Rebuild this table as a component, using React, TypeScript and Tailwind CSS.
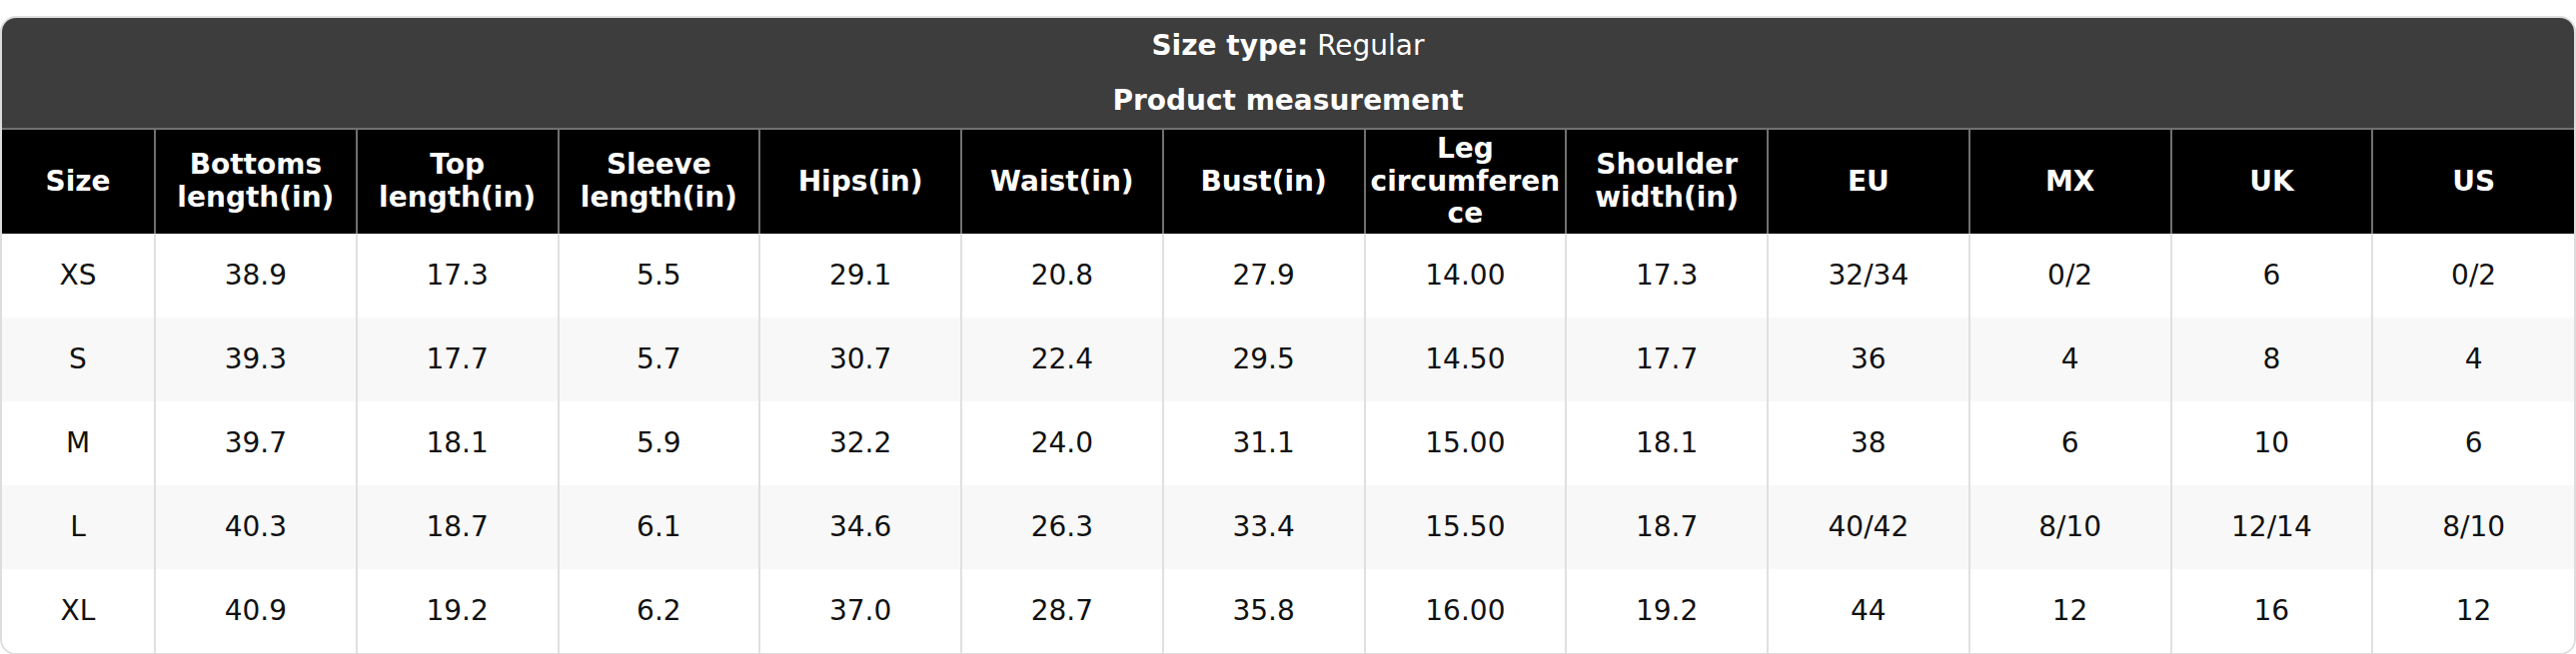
import React from "react";

const headers = [
  "Size",
  "Bottoms length(in)",
  "Top length(in)",
  "Sleeve length(in)",
  "Hips(in)",
  "Waist(in)",
  "Bust(in)",
  "Leg circumference",
  "Shoulder width(in)",
  "EU",
  "MX",
  "UK",
  "US",
];

const rows = [
  ["XS", "38.9", "17.3", "5.5", "29.1", "20.8", "27.9", "14.00", "17.3", "32/34", "0/2", "6", "0/2"],
  ["S", "39.3", "17.7", "5.7", "30.7", "22.4", "29.5", "14.50", "17.7", "36", "4", "8", "4"],
  ["M", "39.7", "18.1", "5.9", "32.2", "24.0", "31.1", "15.00", "18.1", "38", "6", "10", "6"],
  ["L", "40.3", "18.7", "6.1", "34.6", "26.3", "33.4", "15.50", "18.7", "40/42", "8/10", "12/14", "8/10"],
  ["XL", "40.9", "19.2", "6.2", "37.0", "28.7", "35.8", "16.00", "19.2", "44", "12", "16", "12"],
];

export default function App() {
  return (
    <div className="w-[2578px] bg-white pt-4" style={{ fontFamily: '"DejaVu Sans", Verdana, sans-serif' }}>
      <div className="overflow-hidden rounded-[16px] border-2 border-[#dddddd] bg-white">
        <div className="bg-[#3d3d3d] text-white text-[28px]">
          <div className="flex h-[55px] items-center justify-center">
            <span className="font-bold">Size type:</span>
            <span className="ml-[9px]">Regular</span>
          </div>
          <div className="flex h-[55px] items-center justify-center font-bold">Product measurement</div>
        </div>
        <table className="w-full table-fixed border-collapse text-[28px]">
          <colgroup>
            <col className="w-[153px]" />
            {headers.slice(1).map((h) => (
              <col key={h} />
            ))}
          </colgroup>
          <thead>
            <tr className="h-[105px] bg-black text-white">
              {headers.map((h, i) => (
                <th
                  key={h}
                  className={`border-t-2 border-[#707070] px-[4px] py-0 text-center align-middle font-bold leading-[1.17] break-words ${
                    i > 0 ? "border-l-2" : ""
                  }`}
                >
                  {h}
                </th>
              ))}
            </tr>
          </thead>
          <tbody>
            {rows.map((r, ri) => (
              <tr key={r[0]} className={`h-[84px] ${ri % 2 === 1 ? "bg-[#f8f8f8]" : "bg-white"}`}>
                {r.map((c, ci) => (
                  <td
                    key={ci}
                    className={`text-center align-middle text-[#111111] ${ci > 0 ? "border-l-2 border-[#e0e0e0]" : ""}`}
                  >
                    {c}
                  </td>
                ))}
              </tr>
            ))}
          </tbody>
        </table>
      </div>
    </div>
  );
}
